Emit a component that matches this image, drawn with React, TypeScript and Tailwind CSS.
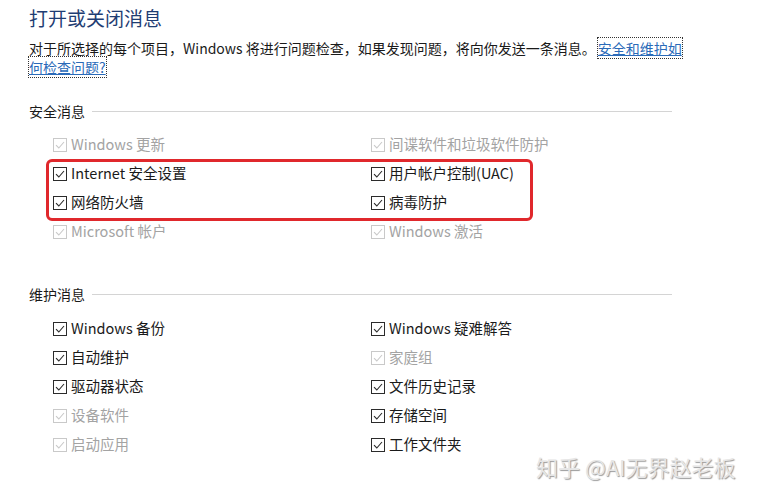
import React from "react";

const font = { fontFamily: '"Noto Sans CJK SC", "Noto Sans", sans-serif' };

function Check({ on = true }: { on?: boolean }) {
  const c = on ? "#2b2b2b" : "#c9c9c9";
  return (
    <svg width="14" height="14" viewBox="0 0 14 14" className="shrink-0">
      <rect x="0.5" y="0.5" width="13" height="13" fill="#fff" stroke={c} strokeWidth="1" />
      <path d="M3 7.2 L5.8 10 L11 4" fill="none" stroke={c} strokeWidth="1.1" />
    </svg>
  );
}

function Item({ label, on = true }: { label: string; on?: boolean }) {
  return (
    <div className="flex h-[29px] items-center gap-[4px]">
      <Check on={on} />
      <span className={`text-[14.5px] leading-none ${on ? "text-[#1a1a1a]" : "text-[#a3a3a3]"}`}>{label}</span>
    </div>
  );
}

function Section({ title }: { title: string }) {
  return (
    <div className="flex h-[20px] items-center pr-[91px]">
      <span className="text-[14px] leading-none text-[#1a1a1a]">{title}</span>
      <div className="ml-[7px] h-px flex-1 bg-[#d4d4d4]" />
    </div>
  );
}

export default function App() {
  const sec1: [string, boolean][] = [
    ["Windows 更新", false],
    ["间谍软件和垃圾软件防护", false],
    ["Internet 安全设置", true],
    ["用户帐户控制(UAC)", true],
    ["网络防火墙", true],
    ["病毒防护", true],
    ["Microsoft 帐户", false],
    ["Windows 激活", false],
  ];
  const sec2: [string, boolean][] = [
    ["Windows 备份", true],
    ["Windows 疑难解答", true],
    ["自动维护", true],
    ["家庭组", false],
    ["驱动器状态", true],
    ["文件历史记录", true],
    ["设备软件", false],
    ["存储空间", true],
    ["启动应用", false],
    ["工作文件夹", true],
  ];
  return (
    <div className="relative h-[500px] w-[763px] overflow-hidden bg-white pl-[29px]" style={font}>
      <div className="pt-[6px] text-[19px] leading-[24px] text-[#1f3d73]">打开或关闭消息</div>
      <div className="mt-[9px] text-[14px] leading-[19px] text-[#1a1a1a]">
        <div>
          对于所选择的每个项目，Windows 将进行问题检查，如果发现问题，将向你发送一条消息。
          <span className="ml-[2px] text-[#2a6ab8] underline outline-1 outline-dotted outline-[#333]">安全和维护如</span>
        </div>
        <div>
          <span className="text-[#2a6ab8] underline outline-1 outline-dotted outline-[#333]">何检查问题?</span>
        </div>
      </div>
      <div className="mt-[24px]">
        <Section title="安全消息" />
      </div>
      <div className="mt-[9px] grid grid-cols-[318px_1fr] pl-[24px]">
        {sec1.map(([l, on]) => (
          <Item key={l} label={l} on={on} />
        ))}
      </div>
      <div className="mt-[38px]">
        <Section title="维护消息" />
      </div>
      <div className="mt-[10px] grid grid-cols-[318px_1fr] pl-[24px]">
        {sec2.map(([l, on]) => (
          <Item key={l} label={l} on={on} />
        ))}
      </div>
      <div className="pointer-events-none absolute left-[46px] top-[159px] h-[62px] w-[487px] rounded-[6px] border-[3px] border-[#e0282c]" />
      <div
        className="absolute left-[536px] top-[452px] text-[22px] leading-[28px] text-[#e6e6e6]"
        style={{ textShadow: "1px 1px 1px #9a9a9a" }}
      >
        知乎 @AI无界赵老板
      </div>
    </div>
  );
}
